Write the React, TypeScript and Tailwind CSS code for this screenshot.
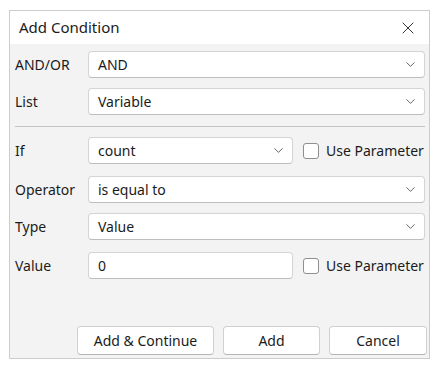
import { X, ChevronDown } from 'lucide-react'

const font = { fontFamily: '"Noto Sans", "Open Sans", sans-serif' }

function Select({ value, className = '' }: { value: string; className?: string }) {
  return (
    <div
      className={`flex h-[27px] items-center justify-between rounded-[4px] border border-[#d4d4d4] border-b-[#bdbdbd] bg-white pl-[9px] pr-[6px] text-[14px] text-[#1b1b1b] ${className}`}
    >
      <span>{value}</span>
      <ChevronDown size={15} strokeWidth={1.2} className="text-[#333]" />
    </div>
  )
}

function Check() {
  return (
    <div className="flex items-center gap-[7px] text-[14px] text-[#1b1b1b]">
      <div className="h-[16px] w-[16px] rounded-[3px] border border-[#8f8f8f] bg-white" />
      <span>Use Parameter</span>
    </div>
  )
}

function Row({ label, children, className = '' }: { label: string; children: React.ReactNode; className?: string }) {
  return (
    <div className={`flex items-center ${className}`}>
      <div className="w-[73px] text-[14px] text-[#1b1b1b]">{label}</div>
      {children}
    </div>
  )
}

function Button({ label, className = '' }: { label: string; className?: string }) {
  return (
    <div
      className={`flex h-[29px] items-center justify-center rounded-[4px] border border-[#d0d0d0] border-b-[#b5b5b5] bg-white text-[14px] text-[#1b1b1b] ${className}`}
    >
      {label}
    </div>
  )
}

const App = () => {
  return (
    <div className="h-[370px] w-[438px] bg-white pl-[9px] pt-[10px]" style={font}>
      <div className="flex h-[349px] w-[421px] flex-col border border-[#cccccc]">
        <div className="flex h-[33px] items-center justify-between bg-white pl-[9px] pr-[11px]">
          <span className="text-[15px] text-[#1b1b1b]">Add Condition</span>
          <X size={20} strokeWidth={1.1} className="text-[#222]" />
        </div>
        <div className="flex flex-1 flex-col bg-[#f3f3f3] pl-[5px] pr-[4px] pt-[7px]">
          <Row label="AND/OR">
            <Select value="AND" className="flex-1" />
          </Row>
          <Row label="List" className="mt-[10px]">
            <Select value="Variable" className="flex-1" />
          </Row>
          <div className="mt-[11px] h-px bg-[#c4c4c4]" />
          <Row label="If" className="mt-[10px]">
            <Select value="count" className="w-[205px]" />
            <div className="ml-[10px]">
              <Check />
            </div>
          </Row>
          <Row label="Operator" className="mt-[12px]">
            <Select value="is equal to" className="flex-1" />
          </Row>
          <Row label="Type" className="mt-[10px]">
            <Select value="Value" className="flex-1" />
          </Row>
          <Row label="Value" className="mt-[12px]">
            <div className="flex h-[27px] w-[205px] items-center rounded-[4px] border border-[#d4d4d4] border-b-[#bdbdbd] bg-white pl-[9px] text-[14px] text-[#1b1b1b]">
              0
            </div>
            <div className="ml-[10px]">
              <Check />
            </div>
          </Row>
          <div className="mt-auto mb-[3px] mr-[-2px] flex justify-end gap-[9px]">
            <Button label="Add & Continue" className="w-[137px]" />
            <Button label="Add" className="w-[97px]" />
            <Button label="Cancel" className="w-[98px]" />
          </div>
        </div>
      </div>
    </div>
  )
}

export default App
